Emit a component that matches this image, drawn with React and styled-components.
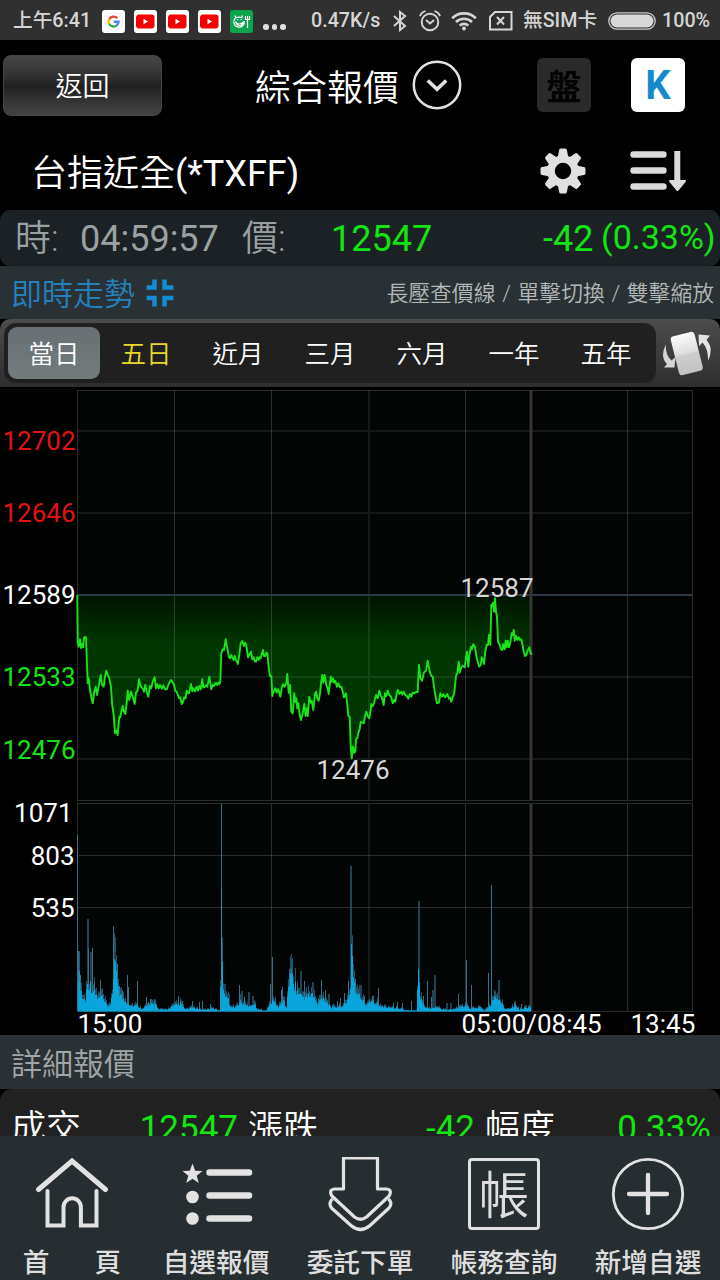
import React from "react";
import styled, { createGlobalStyle } from "styled-components";

const UP = "#e01414";
const DOWN = "#12e512";

const tabs = ["當日", "五日", "近月", "三月", "六月", "一年", "五年"];

// price curve, in thirds of a pixel from the left edge / from y = 570
const morning = [
  [232, 75], [233, 215], [236, 230], [240, 208], [243, 234], [246, 222], [249, 232], [252, 205], [255, 200], [258, 203],
  [260, 260], [263, 340], [266, 325], [270, 360], [274, 382], [278, 400], [283, 365], [287, 350], [291, 375], [297, 345],
  [302, 315], [306, 345], [311, 350], [315, 320], [319, 302], [323, 315], [328, 325], [333, 350], [336, 400], [341, 435],
  [345, 490], [349, 482], [353, 495], [358, 440], [361, 442], [364, 425], [368, 408], [372, 425], [376, 432], [380, 400],
  [383, 362], [388, 390], [393, 365], [398, 380], [404, 402], [408, 368], [413, 362], [417, 328], [421, 345], [424, 350],
  [429, 358], [432, 365], [436, 345], [441, 368], [445, 380], [450, 348], [454, 355], [458, 335], [464, 322], [468, 355],
  [472, 343], [476, 355], [480, 345], [485, 356], [490, 346], [495, 358], [500, 358], [506, 342], [513, 330], [517, 336],
  [522, 345], [526, 362], [530, 365], [537, 385], [541, 382], [545, 402], [549, 396], [553, 382], [557, 385], [560, 362],
  [564, 370], [567, 370], [573, 342], [577, 364], [580, 355], [585, 364], [590, 350], [594, 362], [598, 348], [602, 358],
  [607, 328], [610, 352], [613, 352], [618, 346], [622, 350], [628, 320], [634, 358], [638, 344], [642, 348], [648, 338],
  [652, 345], [655, 338], [658, 342], [661, 335], [664, 250], [668, 238], [672, 240], [677, 208], [680, 228], [684, 245],
  [687, 262], [690, 265], [694, 255], [697, 262], [701, 270], [704, 258], [707, 268], [713, 282], [718, 255], [722, 220],
  [727, 213], [732, 228], [735, 218], [739, 225], [744, 262], [749, 252], [753, 245], [757, 268], [761, 262], [764, 274],
  [768, 275], [772, 262], [776, 270], [779, 262], [782, 265], [786, 250], [789, 240], [792, 258], [796, 258], [799, 248],
  [802, 250], [807, 300], [810, 318], [814, 318],
];
const night = [
  [37, 378], [42, 362], [46, 355], [50, 368], [55, 358], [61, 380], [66, 350], [70, 343], [74, 350], [79, 340],
  [82, 312], [86, 368], [90, 345], [94, 425], [98, 430], [103, 370], [106, 395], [109, 385], [112, 415], [115, 400],
  [119, 435], [123, 450], [128, 430], [133, 402], [137, 438], [140, 415], [143, 438], [148, 380], [152, 398], [155, 392],
  [160, 420], [165, 372], [168, 365], [172, 385], [176, 392], [180, 370], [183, 340], [187, 315], [190, 338], [194, 315],
  [199, 345], [203, 355], [206, 372], [212, 320], [215, 335], [219, 325], [222, 338], [226, 332], [231, 350], [235, 340],
  [240, 352], [244, 350], [249, 368], [252, 382], [258, 370], [262, 405], [265, 438], [269, 440], [272, 530], [275, 565],
  [279, 530], [283, 548], [286, 545], [288, 508], [292, 505], [295, 490], [299, 478], [302, 455], [307, 458], [311, 460],
  [315, 440], [319, 425], [324, 440], [328, 445], [331, 430], [334, 402], [338, 408], [342, 400], [345, 388], [348, 375],
  [353, 385], [358, 362], [362, 378], [365, 380], [371, 405], [375, 370], [379, 378], [383, 362], [388, 375], [393, 380],
  [398, 400], [402, 390], [406, 395], [410, 370], [414, 360], [418, 372], [423, 365], [427, 374], [431, 365], [436, 375],
  [440, 378], [445, 386], [450, 372], [454, 380], [458, 368], [463, 370], [468, 366], [473, 366], [477, 285], [481, 325],
  [486, 332], [492, 308], [498, 302], [503, 272], [507, 295], [510, 308], [514, 318], [518, 320], [522, 350], [525, 370],
  [531, 400], [537, 398], [541, 370], [546, 380], [550, 373], [555, 382], [559, 378], [562, 372], [567, 386], [571, 384],
  [574, 395], [578, 382], [582, 372], [585, 350], [588, 318], [592, 310], [596, 275], [599, 308], [604, 292], [609, 288],
  [614, 292], [618, 262], [621, 245], [625, 290], [629, 250], [633, 230], [636, 238], [640, 223], [645, 232], [650, 265],
  [654, 278], [658, 290], [662, 285], [665, 262], [668, 268], [672, 282], [676, 245], [680, 225], [684, 225], [687, 195],
  [691, 225], [694, 105], [697, 108], [699, 98], [702, 125], [705, 85], [708, 125], [711, 140], [714, 215], [719, 225],
  [723, 238], [727, 240], [730, 222], [734, 238], [737, 212], [740, 232], [743, 212], [747, 232], [751, 218], [755, 190],
  [758, 195], [761, 180], [764, 212], [768, 198], [772, 210], [776, 202], [780, 210], [784, 208], [788, 228], [791, 245],
  [795, 258], [799, 255], [803, 242], [808, 232], [812, 250], [815, 255],
];
const line = [...morning, ...night.map(([x, y]) => [x + 780, y])]
  .map(([x, y]) => `${(x / 3).toFixed(1)},${(570 + y / 3).toFixed(1)}`)
  .join(" ");

// usual volume level along the x axis
const levels = [
  [78, 42], [80, 28], [82, 14], [85, 12], [87, 30], [91, 26], [95, 18], [98, 13], [101, 16], [104, 10], [108, 4],
  [110, 8], [112, 22], [114, 44], [116, 42], [119, 20], [122, 13], [127, 9], [131, 6], [137, 6], [141, 3],
  [150, 7], [156, 8], [158, 2], [167, 2], [172, 5], [180, 8], [185, 2], [193, 4], [199, 2], [206, 2],
  [212, 3], [219, 1], [221, 60], [223, 26], [227, 14], [231, 4], [236, 5], [240, 10], [246, 6], [250, 7],
  [255, 7], [257, 2], [266, 1], [271, 10], [274, 11], [278, 4], [283, 13], [286, 3], [288, 30], [292, 38],
  [296, 22], [301, 16], [306, 15], [312, 18], [317, 7], [321, 15], [326, 11], [331, 4], [339, 5], [346, 8],
  [350, 24], [351, 80], [353, 36], [356, 18], [361, 14], [365, 7], [370, 12], [375, 10], [380, 5], [392, 4],
  [401, 3], [405, 1], [416, 1], [418, 55], [420, 14], [424, 5], [430, 3], [436, 5], [442, 2], [452, 2],
  [460, 4], [466, 6], [470, 3], [480, 4], [484, 1], [490, 6], [493, 13], [499, 13], [504, 3], [511, 4],
  [515, 7], [519, 2], [525, 4], [531, 4],
];

const spikes = [
  [77, 176], [78, 60], [80, 36], [87, 92, 2], [88, 63], [90, 59, 2], [92, 63], [94, 28], [100, 31], [113, 85], [114, 59, 2],
  [117, 47], [119, 25], [122, 21], [127, 36], [128, 24], [137, 30], [146, 14], [148, 9], [150, 12], [154, 12], [178, 15],
  [182, 10], [192, 10], [199, 9], [202, 10], [210, 7], [221, 207], [222, 38], [224, 27, 2], [228, 17, 2], [239, 26],
  [241, 20, 2], [244, 14], [248, 19, 2], [252, 15, 2], [270, 27], [272, 54], [281, 21], [282, 24], [289, 42], [291, 43],
  [297, 26], [300, 40, 2], [304, 30], [312, 29, 2], [321, 31], [325, 21], [328, 17, 2], [337, 10], [340, 13], [344, 18],
  [348, 30], [350, 145, 2], [352, 46, 2], [355, 32], [360, 26, 2], [364, 15], [372, 15], [378, 23], [393, 8], [397, 9],
  [402, 8], [411, 10], [418, 110, 2], [423, 15], [427, 30], [431, 14], [432, 21, 2], [434, 36, 2], [446, 8, 2], [450, 8, 2],
  [458, 17], [466, 51], [471, 26], [488, 38], [491, 126], [498, 31, 2], [495, 15], [514, 9], [521, 7], [525, 6, 2], [529, 6],
];

const levelAt = (x) => {
  let i = 0;
  while (i < levels.length - 2 && levels[i + 1][0] <= x) i++;
  const [x0, a] = levels[i];
  const [x1, b] = levels[i + 1];
  return a + ((b - a) * (x - x0)) / (x1 - x0);
};

const bars = Array.from({ length: 453 }, (_, i) => {
  const x = 78 + i;
  const n = Math.abs(Math.sin(i * 12.9898) * 43758.5453) % 1;
  const level = levelAt(x);
  return { x, solid: Math.max(1, level * (0.7 + n * 0.5)), faint: level * (0.8 + n) };
});

const MarketIcons = () => (
  <>
    <AppTile $bg="#fff">
      <svg width="23" height="23" viewBox="0 0 23 23" fill="none" strokeWidth="2.4">
        <circle cx="11.5" cy="11.5" r="9" stroke="#ececec" strokeWidth=".7" />
        <path d="M15.3 8.2A5 5 0 0 0 7.4 8.9" stroke="#e84335" />
        <path d="M7.4 8.8A5 5 0 0 0 7.4 14.2" stroke="#fabb05" />
        <path d="M7.3 14A5 5 0 0 0 14.8 15.3" stroke="#34a853" />
        <path d="M14.7 15.4A5 5 0 0 0 16.5 11.7H11.8" stroke="#4285f4" />
      </svg>
    </AppTile>
    {[0, 1, 2].map((n) => (
      <AppTile key={n} $bg="#fff">
        <svg width="23" height="23" viewBox="0 0 23 23">
          <rect x="2" y="4.5" width="18.5" height="14" rx="3" fill="#f50000" />
          <path d="M9.5 8.8v5.4l4.600-2.700z" fill="#fff" />
        </svg>
      </AppTile>
    ))}
    <AppTile $bg="#0ca44c">
      <svg width="23" height="23" viewBox="0 0 23 23" fill="none" stroke="#fff" strokeWidth="1.2">
        <path d="M5 5.500l.8 2.300M12.500 5.500l-.8 2.300M5.800 7.800q3.200-1.300 6 0" />
        <path d="M5.500 8a5.300 5.300 0 1 0 8.800 3" />
        <path d="M5.500 11.500q3.500 5 8.500 0M5.500 12q3.500 7.500 8.500 0M7 9.500h1.300M10.500 9.500h1.300" />
        <path d="M17.500 10v8M15.500 6v3.500h4V6M17.500 6v4" />
      </svg>
    </AppTile>
  </>
);

const Bluetooth = () => (
  <svg width="16" height="22" viewBox="0 0 16 22" fill="none" stroke="#d6d6d6" strokeWidth="2">
    <path d="M2 6l11 10-5 4V2l5 4L2 16" />
  </svg>
);

const Alarm = () => (
  <svg width="22" height="22" viewBox="0 0 22 22" fill="none" stroke="#d6d6d6" strokeWidth="1.9">
    <circle cx="11" cy="12" r="8.3" />
    <path d="M7 10l4 3.5 4-3.5M1 6.2C2 3.5 4 1.8 6.5 1.2M21 6.2C20 3.5 18 1.8 15.5 1.2" />
  </svg>
);

const Wifi = () => (
  <svg width="26" height="20" viewBox="0 0 26 20" fill="none" stroke="#d6d6d6" strokeWidth="2.7">
    <path d="M1.2 7.2a17 17 0 0 1 23.6 0M5 11a11.5 11.5 0 0 1 16 0M8.8 14.6a6 6 0 0 1 8.4 0" />
    <circle cx="13" cy="17.5" r="1.9" fill="#d6d6d6" stroke="none" />
  </svg>
);

const NoSim = () => (
  <svg width="24" height="20" viewBox="0 0 24 20" fill="none" stroke="#d6d6d6" strokeWidth="2">
    <path d="M6 1h16.500v17.500H1V6z" />
    <path d="M8 6l7 7.500M15 6l-7 7.500" />
  </svg>
);

const Battery = () => (
  <svg width="48" height="18" viewBox="0 0 48 18">
    <rect x=".8" y=".8" width="46.4" height="16.4" rx="8.2" fill="none" stroke="#c9c9c9" strokeWidth="1.3" />
    <rect x="2.5" y="2.5" width="43" height="13" rx="6.5" fill="#d8d8d8" />
  </svg>
);

const Gear = () => (
  <svg width="46" height="46" viewBox="-23 -23 46 46">
    <g fill="#e0e0e0">
      {[0, 45, 90, 135, 180, 225, 270, 315].map((a) => (
        <path key={a} d="M-5.400 -13L-3.900 -21Q-3.700 -22.500 -2.200 -22.500H2.200Q3.700 -22.500 3.900 -21L5.400 -13z" transform={`rotate(${a})`} />
      ))}
    </g>
    <circle r="12" fill="none" stroke="#e0e0e0" strokeWidth="7.600" />
  </svg>
);

const SortIcon = () => (
  <svg width="57" height="42" viewBox="0 0 57 42">
    <path d="M3.5 4.5H33.5M3.5 20.5H33.5M3.5 36.5H33.5" stroke="#dadada" strokeWidth="6.4" strokeLinecap="round" />
    <path d="M47.300 1V32" stroke="#dadada" strokeWidth="6" />
    <path d="M39.5 30H55.5Q56.5 31 55.5 32L48.5 40.5Q47.5 41.5 46.5 40.5L39.5 32Q38.5 31 39.5 30z" fill="#dadada" />
  </svg>
);

const Collapse = () => (
  <svg width="28" height="28" viewBox="0 0 28 28" fill="none" stroke="#148bd0" strokeWidth="4.5">
    <path d="M.5 8.500H8.500V.5M18.500 .5V8.500H27.500M.5 19H8.500V27.500M18.500 27.500V19H27.500" />
  </svg>
);

const Rotate = () => (
  <svg width="50" height="50" viewBox="0 0 50 50">
    <defs>
      <linearGradient id="card" x1="0" y1="0" x2="0" y2="1">
        <stop offset="0" stopColor="#fbfbfb" />
        <stop offset=".48" stopColor="#dedede" />
        <stop offset=".54" stopColor="#cdcdcd" />
        <stop offset="1" stopColor="#c2c2c2" />
      </linearGradient>
    </defs>
    <rect x="12.500" y="5.500" width="24.500" height="40" rx="3.500" fill="url(#card)" transform="rotate(-14 25 25.5)" />
    <path d="M4 16Q-2.500 29 5 36L2 39.500H12.500L13.500 29L9.500 32.500Q3 27 4 16z" fill="#d4d4d4" />
    <path d="M46 33Q52 20 44.500 12L48 7.500L36.500 6.500L37 18L40.500 14.500Q46.500 21 46 33z" fill="#e4e4e4" />
  </svg>
);

const Home = () => (
  <svg width="74" height="74" viewBox="0 0 74 74" fill="none" stroke="#e2e2e2" strokeWidth="4" strokeLinecap="round">
    <path d="M3.500 32.500L37 4L70.500 32.500" strokeWidth="5" />
    <path d="M12.500 34V68.500H28.500V50a8.700 8.700 0 0 1 17.400 0V68.500H61.500V34" />
  </svg>
);

const Watchlist = () => (
  <svg width="74" height="74" viewBox="0 0 74 74" fill="#e2e2e2">
    <path d="M13.500 6.500L16.200 13.700L23.500 14L17.700 18.700L19.800 26L13.500 21.800L7.200 26L9.300 18.700L3.500 14L10.800 13.700z" />
    <circle cx="13.500" cy="40" r="6.300" />
    <circle cx="13.500" cy="61.500" r="6.300" />
    <path d="M30.500 15.500H70M30.500 38.500H70M30.500 61.500H70" stroke="#e2e2e2" strokeWidth="6.5" strokeLinecap="round" />
  </svg>
);

const Order = () => (
  <svg width="74" height="80" viewBox="0 2 74 80" fill="none" stroke="#e2e2e2" strokeWidth="3.2" strokeLinejoin="round">
    <path d="M20.500 3H54.500V34H63.500Q68.500 34.500 67 39Q66.500 41 64.500 42.500L43.500 62Q37.500 66.500 31.500 62L10.500 42.500Q8.500 41 8 39Q6.500 34.500 11.500 34H20.500z" />
    <path d="M9.500 44Q5 48 8.500 53L28 70.500Q37.500 78.500 47 70.500L66 53Q70 48 65.500 44" />
  </svg>
);

const AddIcon = () => (
  <svg width="74" height="74" viewBox="0 0 74 74" fill="none" stroke="#e2e2e2">
    <circle cx="37" cy="37" r="34.700" strokeWidth="2.800" />
    <path d="M18 37H56M37 18V56" strokeWidth="4.300" strokeLinecap="round" />
  </svg>
);

const Chart = () => (
  <ChartSvg viewBox="0 387 720 648">
    <defs>
      <linearGradient id="drop" gradientUnits="userSpaceOnUse" x1="0" y1="596" x2="0" y2="645">
        <stop offset="0" stopColor="#001500" />
        <stop offset="1" stopColor="#003600" />
      </linearGradient>
    </defs>
    <rect x="77" y="390" width="616" height="621" fill="#030504" />
    <polygon points={`77,595 ${line} 531.5,595`} fill="url(#drop)" />
    <g stroke="#fff" strokeOpacity=".16">
      <path d="M77.5 390.5H692.5V800.5H77.5zM77.5 803.5H692.5V1011.5H77.5z" fill="none" />
      <path d="M174.5 390V800M271.5 390V800M465.5 390V800M627.5 390V800" />
      <path d="M174.5 804V1011M271.5 804V1011M465.5 804V1011M627.5 804V1011M77 855.5H692M77 907.5H692" />
      <path d="M369 390V800M369 804V1011M77 431H692M77 513H692M77 677H692M77 759H692" strokeWidth="2" strokeOpacity=".08" />
    </g>
    <path d="M77 595H692" stroke="#2b3a46" strokeWidth="2" />
    <path d="M531 390V800M531 804V1011" stroke="#353535" strokeWidth="3" />
    <polyline points={line} fill="none" stroke="#19e319" strokeWidth="1.9" strokeLinejoin="round" />
    {bars.map((b) => (
      <rect key={b.x} x={b.x} y={1011.5 - b.faint} width="1" height={b.faint} fill="#1c556e" />
    ))}
    {spikes.map(([x, h, w = 1]) => (
      <rect key={x} x={x} y={1011 - h} width={w} height={h} fill={w === 2 ? "#1f4354" : "#36718c"} />
    ))}
    {bars.map((b) => (
      <rect key={b.x} x={b.x} y={1011.5 - b.solid} width="1" height={b.solid} fill="#08a4dc" />
    ))}
    <rect x="221" y="889" width="1" height="122" fill="#2690bb" />
    <AxisText x="75.5" y="450" textAnchor="end" fill={UP}>12702</AxisText>
    <AxisText x="75.5" y="522" textAnchor="end" fill={UP}>12646</AxisText>
    <AxisText x="75.5" y="604" textAnchor="end">12589</AxisText>
    <AxisText x="75.5" y="686" textAnchor="end" fill={DOWN}>12533</AxisText>
    <AxisText x="75.5" y="759" textAnchor="end" fill={DOWN}>12476</AxisText>
    <AxisText x="72.5" y="822" textAnchor="end">1071</AxisText>
    <AxisText x="74.5" y="865" textAnchor="end">803</AxisText>
    <AxisText x="74.5" y="917" textAnchor="end">535</AxisText>
    <AxisText x="533.5" y="597" textAnchor="end" fill="#d8d8d8">12587</AxisText>
    <AxisText x="353" y="779" textAnchor="middle" fill="#d8d8d8">12476</AxisText>
    <AxisText x="77.5" y="1033">15:00</AxisText>
    <AxisText x="461.5" y="1033">05:00/08:45</AxisText>
    <AxisText x="630.5" y="1033">13:45</AxisText>
  </ChartSvg>
);

const App = () => {
  return (
    <Page>
      <GlobalStyle />
      <StatusBar>
        <StatusText>上午6:41</StatusText>
        <MarketIcons />
        <Dots>
          <i />
          <i />
          <i />
        </Dots>
        <StatusText>0.47K/s</StatusText>
        <Bluetooth />
        <Alarm />
        <Wifi />
        <NoSim />
        <StatusText>無SIM卡</StatusText>
        <Battery />
        <StatusText>100%</StatusText>
      </StatusBar>

      <Header>
        <BackButton>返回</BackButton>
        <Title>綜合報價</Title>
        <svg width="50" height="50" viewBox="0 0 50 50" fill="none" stroke="#e2e2e2">
          <circle cx="25" cy="25" r="23.2" strokeWidth="2.5" />
          <path d="M15.8 20.5L25 29.3L34.2 20.5" strokeWidth="3.6" />
        </svg>
        <SquareButton $bg="#2a2a2a" $color="#030303" $size={35} $line={61}>盤</SquareButton>
        <SquareButton $bg="#fff" $color="#148bc8" $size={40} $line={56}>K</SquareButton>
      </Header>

      <SymbolRow>
        <Title>
          台指近全<Latin>(*TXFF)</Latin>
        </Title>
        <Gear />
        <SortIcon />
      </SymbolRow>

      <QuoteBar>
        <span>時:</span>
        <Latin>04:59:57</Latin>
        <span>價:</span>
        <Green>12547</Green>
        <Change>-42</Change>
        <Percent>(0.33%)</Percent>
      </QuoteBar>

      <SectionBar $height={53}>
        <SectionTitle $color="#2481bd">即時走勢</SectionTitle>
        <Collapse />
        <Hint>長壓查價線 / 單擊切換 / 雙擊縮放</Hint>
      </SectionBar>

      <TabStrip>
        <Tabs>
          {tabs.map((tab, i) => (
            <Tab key={tab} $active={i === 0} $yellow={i === 1}>
              {tab}
            </Tab>
          ))}
        </Tabs>
        <Rotate />
      </TabStrip>

      <Chart />

      <SectionBar $height={54}>
        <SectionTitle $color="#a2a6a6">詳細報價</SectionTitle>
      </SectionBar>

      <Detail>
        <Label>成交</Label>
        <Value>12547</Value>
        <Label>漲跌</Label>
        <Value>-42</Value>
        <Label>幅度</Label>
        <Value>0.33%</Value>
      </Detail>

      <NavBar>
        <NavItem>
          <Home />
          <NavLabel>首<Gap />頁</NavLabel>
        </NavItem>
        <NavItem>
          <Watchlist />
          <NavLabel>自選報價</NavLabel>
        </NavItem>
        <NavItem>
          <Order />
          <NavLabel>委託下單</NavLabel>
        </NavItem>
        <NavItem>
          <Ledger>帳</Ledger>
          <NavLabel>帳務查詢</NavLabel>
        </NavItem>
        <NavItem>
          <AddIcon />
          <NavLabel>新增自選</NavLabel>
        </NavItem>
      </NavBar>
    </Page>
  );
};

export default App;

// Styled Components

const GlobalStyle = createGlobalStyle`
  body {
    margin: 0;
    background: #000;
  }
`;

const Page = styled.div`
  width: 720px;
  height: 1280px;
  display: flex;
  flex-direction: column;
  overflow: hidden;
  background: #000;
  color: #fff;
  font-family: Roboto, "Noto Sans CJK TC", sans-serif;
  font-weight: 350;
  white-space: nowrap;

  > * {
    flex-shrink: 0;
    box-sizing: border-box;
  }

  svg {
    display: block;
  }
`;

const Latin = styled.span`
  font-weight: 400;
`;

const StatusBar = styled.div`
  height: 40px;
  padding-left: 13px;
  display: grid;
  grid-template-columns: 89px repeat(4, 32px) 33px 48px 81px 27px 32px 38px 34px 85px 54px 58px;
  align-items: center;
  background: #303030;
`;

const StatusText = styled.span`
  font-size: 19.7px;
  line-height: 42px;
  font-weight: 500;
  color: #d6d6d6;
`;

const AppTile = styled.div`
  width: 23px;
  height: 23px;
  border-radius: 3px;
  overflow: hidden;
  background: ${(p) => p.$bg};
`;

const Dots = styled.div`
  display: flex;
  gap: 3px;
  padding-top: 12px;

  > i {
    width: 5.5px;
    height: 5.5px;
    border-radius: 50%;
    background: #e0e0e0;
  }
`;

const Header = styled.div`
  height: 90px;
  padding: 0 0 0 3px;
  display: grid;
  grid-template-columns: 252px 157px 125px 94px 60px;
  align-items: center;
`;

const BackButton = styled.div`
  box-sizing: border-box;
  width: 159px;
  height: 61px;
  border: 1px solid #454545;
  border-radius: 8px;
  background: linear-gradient(#484848, #303030 35%, #202020 52%, #303030 70%, #434343);
  font-size: 27px;
  line-height: 62px;
  text-align: center;
`;

const Title = styled.div`
  padding-top: 7px;
  font-size: 36px;
  line-height: 50px;
`;

const SquareButton = styled.div`
  width: 54px;
  height: 54px;
  border-radius: 6px;
  background: ${(p) => p.$bg};
  color: ${(p) => p.$color};
  font-size: ${(p) => p.$size}px;
  font-weight: 700;
  line-height: ${(p) => p.$line}px;
  text-align: center;
`;

const SymbolRow = styled.div`
  height: 80px;
  padding: 1px 0 0 31px;
  display: grid;
  grid-template-columns: 509px 90px 60px;
  align-items: center;
`;

const QuoteBar = styled.div`
  height: 56px;
  padding-left: 15px;
  display: grid;
  grid-template-columns: 65px 162px 89px 205px 58px 120px;
  border-radius: 10px;
  background: #1b2124;
  color: #9ba1a3;
  font-size: 36px;
  line-height: 59px;
`;

const Green = styled.span`
  color: ${DOWN};
  font-weight: 400;
`;

const Change = styled(Green)`
  padding-left: 7px;
`;

const Percent = styled(Green)`
  padding-left: 7px;
  font-size: 34px;
  line-height: 54px;
`;

const SectionBar = styled.div`
  height: ${(p) => p.$height}px;
  padding: 0 6px 0 11px;
  display: flex;
  align-items: center;
  background: #2a3134;
  line-height: 48px;
`;

const SectionTitle = styled.div`
  margin-right: 11px;
  padding-top: 5px;
  color: ${(p) => p.$color};
  font-size: 31px;
`;

const Hint = styled.div`
  margin-left: auto;
  padding-top: 3px;
  color: #b4b8b8;
  font-size: 21.8px;
  word-spacing: 1.4px;
`;

const TabStrip = styled.div`
  height: 68px;
  padding: 4px 8px 4px 4px;
  display: flex;
  align-items: center;
  justify-content: space-between;
  border-radius: 10px 10px 0 0;
  background: linear-gradient(#4c4c4c, #2e2e2e);
`;

const Tabs = styled.div`
  box-sizing: border-box;
  width: 652px;
  height: 60px;
  padding: 4px;
  display: flex;
  border-radius: 12px;
  background: #202020;
`;

const Tab = styled.div`
  width: 92px;
  height: 52px;
  border-radius: 9px;
  background: ${(p) => (p.$active ? "linear-gradient(#687073, #737b7d)" : "transparent")};
  color: ${(p) => (p.$yellow ? "#e8d829" : "#fff")};
  font-size: 25.5px;
  line-height: 55px;
  text-align: center;
`;

const ChartSvg = styled.svg`
  width: 720px;
  height: 648px;
  overflow: visible;
`;

const AxisText = styled.text.attrs((p) => ({ fill: p.fill || "#fff" }))`
  font-size: 26px;
  font-weight: 400;
`;

const Detail = styled.div`
  height: 47px;
  padding: 0 9px 0 11px;
  display: grid;
  grid-template-columns: 72px 155px 82px 155px 82px 154px;
  overflow: hidden;
  border-radius: 12px 12px 0 0;
  background: #212121;
  line-height: 80px;
`;

const Label = styled.span`
  font-size: 35px;

  &:nth-child(n + 2) {
    padding-left: 10px;
  }
`;

const Value = styled.span`
  color: ${DOWN};
  font-size: 35px;
  font-weight: 400;
  text-align: right;
`;

const NavBar = styled.div`
  height: 144px;
  display: grid;
  grid-template-columns: repeat(5, 144px);
  background: #272e31;
`;

const NavItem = styled.div`
  height: 144px;
  padding-top: 21px;
  box-sizing: border-box;
  display: flex;
  flex-direction: column;
  align-items: center;
  justify-content: space-between;

  > svg {
    margin-bottom: -10px;
  }
`;

const NavLabel = styled.div`
  color: #dedede;
  font-size: 26.7px;
  font-weight: 500;
  line-height: 33px;
`;

const Gap = styled.span`
  display: inline-block;
  width: 45px;
`;

const Ledger = styled.div`
  box-sizing: border-box;
  width: 72px;
  height: 72px;
  margin-top: 1px;
  border: 3px solid #e2e2e2;
  border-radius: 4px;
  color: #dedede;
  font-size: 51px;
  font-weight: 350;
  line-height: 72px;
  text-align: center;
`;
